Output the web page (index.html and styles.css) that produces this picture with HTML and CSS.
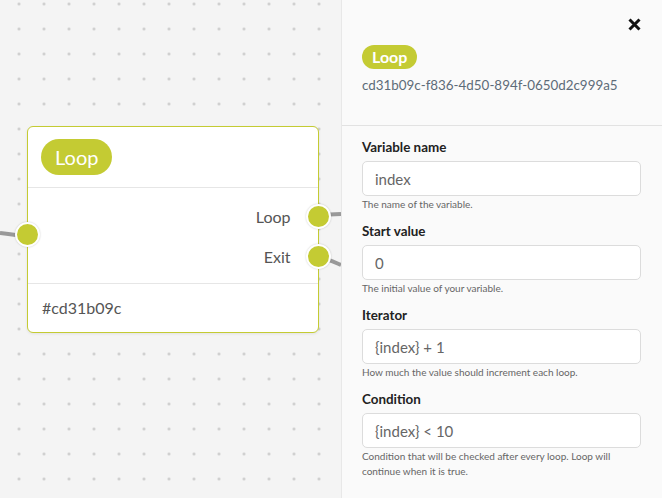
FILE: index.html
```html
<!DOCTYPE html>
<html lang="en">

<head>
    <meta charset="UTF-8" />
    <meta name="viewport" content="width=device-width, initial-scale=1.0" />
    <title>Loop Node</title>
    <link rel="stylesheet" href="styles.css">
</head>

<body>
    <div class="app">
        <!-- Flow canvas -->
        <div class="canvas">
            <svg class="edges" width="341" height="498">
                <path d="M0 233 C 10 234, 18 236, 28 236" />
                <path d="M318 215 L 341 214" />
                <path d="M318 257 C 328 259, 334 262, 341 265" />
            </svg>

            <div class="node">
                <div class="node-head">
                    <span class="pill">Loop</span>
                </div>
                <div class="node-ports">
                    <i class="port port-in"></i>
                    <div class="out-row">
                        <span>Loop</span>
                        <i class="port"></i>
                    </div>
                    <div class="out-row">
                        <span>Exit</span>
                        <i class="port"></i>
                    </div>
                </div>
                <div class="node-foot">#cd31b09c</div>
            </div>
        </div>

        <!-- Side panel -->
        <div class="panel">
            <div class="panel-head">
                <div class="close-row">
                    <button class="close-btn">
                        <svg width="13" height="13" viewBox="0 0 13 13">
                            <path d="M1.5 1.5 L11.5 11.5 M11.5 1.5 L1.5 11.5" />
                        </svg>
                    </button>
                </div>
                <span class="badge">Loop</span>
                <div class="uuid">cd31b09c-f836-4d50-894f-0650d2c999a5</div>
            </div>

            <div class="panel-body">
                <div class="field">
                    <label>Variable name</label>
                    <input type="text" value="index" />
                    <p class="help">The name of the variable.</p>
                </div>
                <div class="field">
                    <label>Start value</label>
                    <input type="text" value="0" />
                    <p class="help">The initial value of your variable.</p>
                </div>
                <div class="field">
                    <label>Iterator</label>
                    <input type="text" value="{index} + 1" />
                    <p class="help">How much the value should increment each loop.</p>
                </div>
                <div class="field">
                    <label>Condition</label>
                    <input type="text" value="{index} < 10" />
                    <p class="help">Condition that will be checked after every loop. Loop will continue when it is true.</p>
                </div>
            </div>
        </div>
    </div>
</body>

</html>
```

FILE: styles.css
```css
body {
    font-family: Lato, "Open Sans", sans-serif;
    margin: 0;
    padding: 0;
    overflow: hidden;
}

.app {
    display: flex;
    height: 498px;
}

/* canvas */

.canvas {
    position: relative;
    width: 341px;
    flex-shrink: 0;
    background-color: #f4f4f4;
    background-image: radial-gradient(circle, #c8c8c8 1px, transparent 1.6px);
    background-size: 25px 25px;
    background-position: 6.5px -8.5px;
}

.edges {
    position: absolute;
    left: 0;
    top: 0;
}

.edges path {
    fill: none;
    stroke: #999;
    stroke-width: 4;
}

.node {
    position: absolute;
    left: 27px;
    top: 126px;
    width: 292px;
    height: 207px;
    box-sizing: border-box;
    background: white;
    border: 1.5px solid #c4cb33;
    border-radius: 6px;
    box-shadow: 0 1px 3px rgba(0, 0, 0, 0.08);
}

.node-head {
    padding: 12px 13px;
    border-bottom: 1px solid #e6e6e6;
}

.pill {
    display: inline-block;
    height: 36px;
    line-height: 36px;
    padding: 0 14px;
    border-radius: 18px;
    background: #c4cb33;
    color: white;
    font-size: 20px;
}

.node-ports {
    position: relative;
    padding: 8px 0 7px;
    border-bottom: 1px solid #e6e6e6;
}

.out-row {
    display: flex;
    justify-content: flex-end;
    align-items: center;
    height: 40px;
    font-size: 16px;
    color: #555;
}

.out-row span {
    margin-right: 15px;
}

.port {
    display: block;
    width: 21px;
    height: 21px;
    border-radius: 50%;
    background: #c4cb33;
    border: 2px solid white;
    box-shadow: 0 0 2px rgba(0, 0, 0, 0.2);
    margin-right: -12.5px;
}

.port-in {
    position: absolute;
    left: -13.5px;
    top: 34px;
}

.node-foot {
    padding: 14px 14px;
    font-size: 16px;
    color: #555;
}

/* panel */

.panel {
    flex: 1;
    background: #fafafa;
    border-left: 1px solid #e8e8e8;
    box-shadow: -1px 0 4px rgba(0, 0, 0, 0.06);
}

.panel-head {
    height: 126px;
    box-sizing: border-box;
    padding: 18px 21px 0 20px;
    border-bottom: 1px solid #e2e2e2;
}

.close-row {
    display: flex;
    justify-content: flex-end;
    height: 16px;
}

.close-btn {
    border: none;
    background: none;
    padding: 0;
    margin: 0;
    width: 13px;
    height: 16px;
    cursor: pointer;
}

.close-btn path {
    stroke: #111;
    stroke-width: 3;
}

.badge {
    display: inline-block;
    margin-top: 11px;
    height: 24px;
    line-height: 24px;
    padding: 0 10px;
    border-radius: 12px;
    background: #c4cb33;
    color: white;
    font-weight: bold;
    font-size: 16px;
}

.uuid {
    margin-top: 6px;
    line-height: 20px;
    font-size: 13.4px;
    color: #5d6b78;
}

.panel-body {
    padding: 11px 21px 0 20px;
}

.field {
    margin-bottom: 9px;
}

.field label {
    display: block;
    line-height: 20px;
    font-size: 13.4px;
    font-weight: bold;
    color: #222;
}

.field input {
    display: block;
    width: 100%;
    box-sizing: border-box;
    height: 35px;
    margin-top: 4px;
    padding: 0 12px;
    border: 1px solid #dcdcdc;
    border-radius: 5px;
    background: white;
    font-family: inherit;
    font-size: 15px;
    color: #666;
}

.help {
    margin: 1px 0 0;
    line-height: 15px;
    font-size: 10px;
    color: #666;
}
```
